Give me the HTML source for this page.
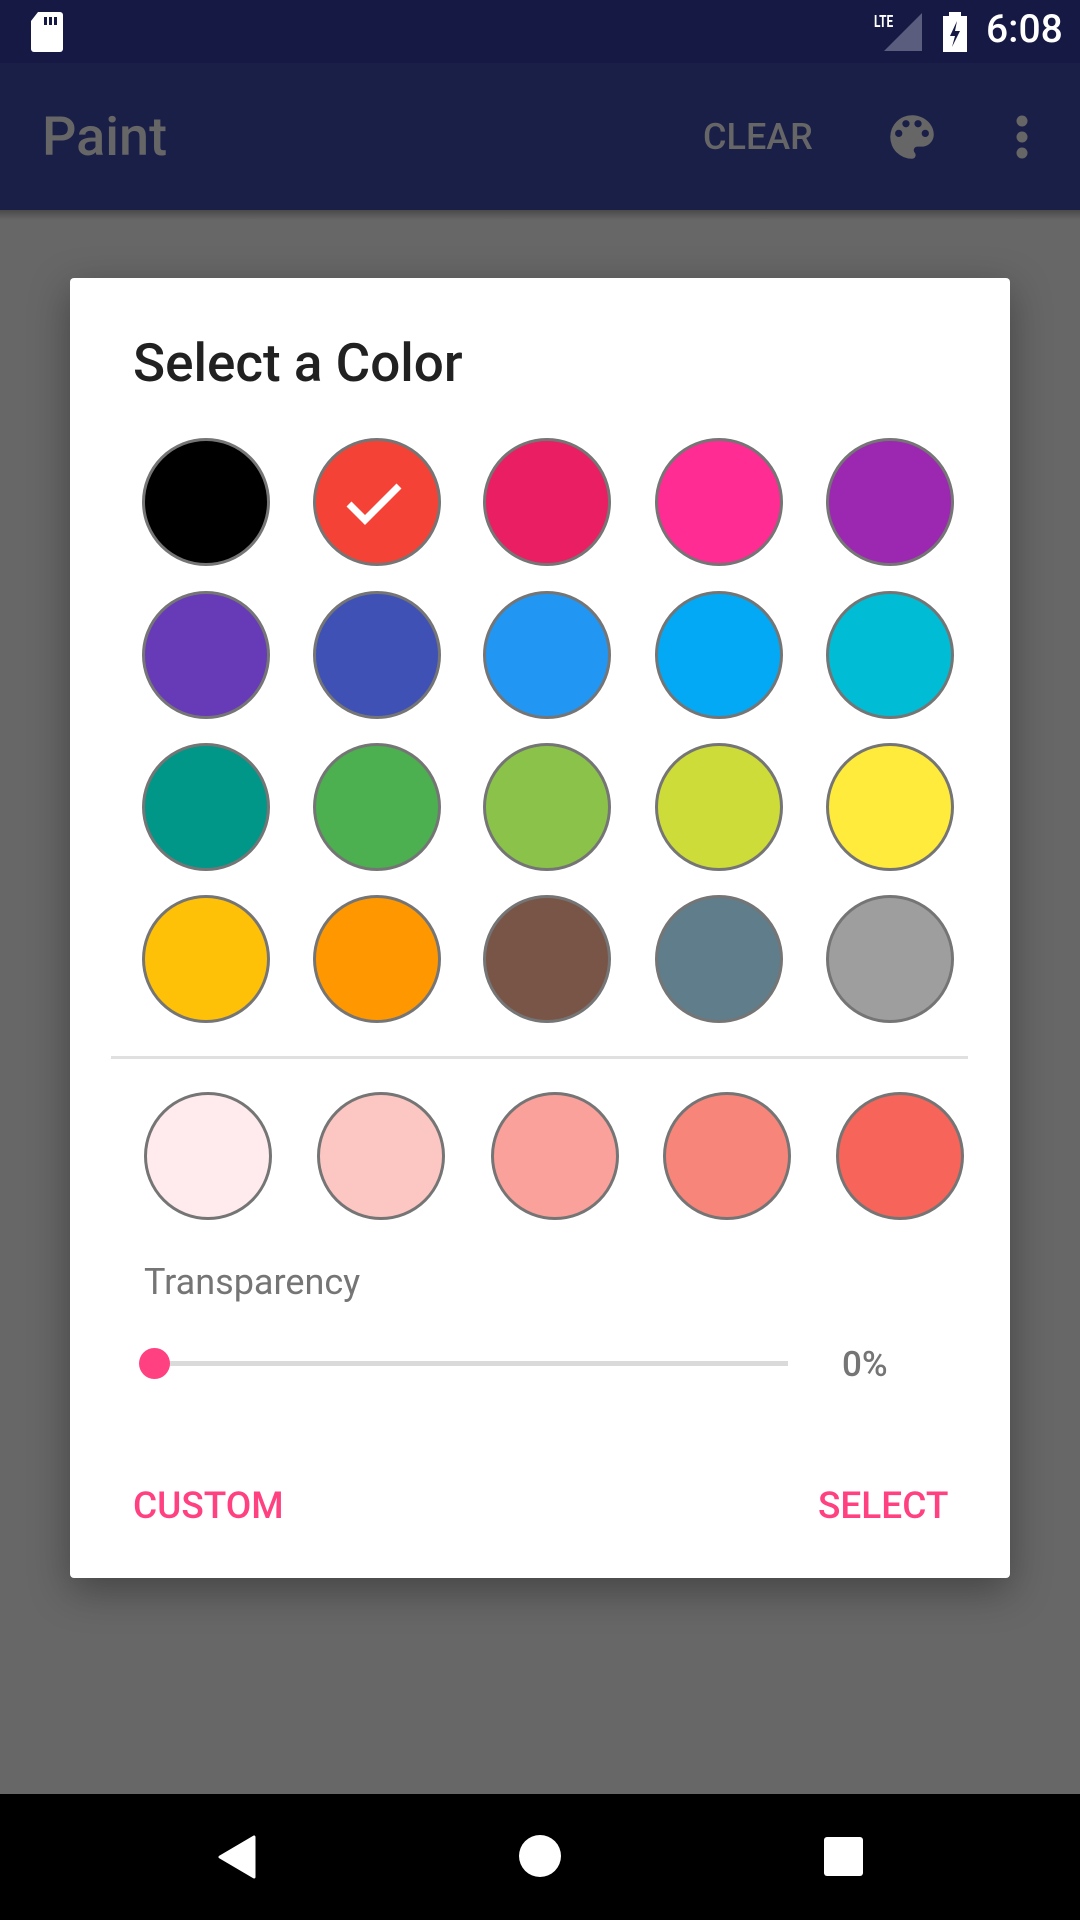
<!DOCTYPE html>
<html><head><meta charset="utf-8"><style>
*{margin:0;padding:0;box-sizing:border-box}
body{width:1080px;height:1920px;position:relative;overflow:hidden;background:#676767;font-family:"Roboto","Liberation Sans",sans-serif}
.abs{position:absolute}
.c{position:absolute;width:128px;height:128px;border-radius:50%;border:3px solid #757575}
</style></head><body>
<div class="abs" style="left:0;top:0;width:1080px;height:63px;background:#151943"></div>
<div class="abs" style="left:0;top:63px;width:1080px;height:147px;background:#1a1f48"></div>
<div class="abs" style="left:0;top:210px;width:1080px;height:10px;background:linear-gradient(#4a4a4a,#676767)"></div>
<svg class="abs" style="left:30px;top:12px" width="34" height="40" viewBox="0 0 34 40"><path d="M8 0H30a3 3 0 0 1 3 3V37a3 3 0 0 1-3 3H4a3 3 0 0 1-3-3V9z" fill="#fff"/><rect x="14" y="5" width="3" height="8" fill="#151943"/><rect x="19" y="5" width="3" height="8" fill="#151943"/><rect x="24" y="5" width="3" height="8" fill="#151943"/></svg>
<div class="abs" style="left:874px;top:12px;color:#fff;font-size:17px;font-weight:bold;transform:scaleX(.7);transform-origin:left">LTE</div>
<svg class="abs" style="left:884px;top:13px" width="38" height="38"><polygon points="38,0 38,38 0,38" fill="#5a5d7e"/></svg>
<svg class="abs" style="left:941px;top:12px" width="28" height="40"><rect x="8" y="0" width="12" height="4" fill="#fff"/><rect x="2" y="4" width="24" height="36" fill="#fff"/><polygon points="16,9 9,24 14,24 11,35 19,19 14,19" fill="#151943"/></svg>
<div class="abs" style="left:986px;top:6px;color:#fff;font-size:39px;font-weight:500">6:08</div>
<div class="abs" style="left:42px;top:106px;color:#666;font-size:54px;font-weight:500">Paint</div>
<div class="abs" style="left:703px;top:116px;color:#666;font-size:36px;font-weight:500">CLEAR</div>
<svg class="abs" style="left:883px;top:108px" width="58" height="58" viewBox="0 0 24 24"><path fill="#666" d="M12 3a9 9 0 0 0 0 18c.83 0 1.5-.67 1.5-1.5 0-.39-.15-.74-.39-1.01-.23-.26-.38-.61-.38-.99 0-.83.67-1.5 1.5-1.5H16c2.76 0 5-2.240 5-5 0-4.42-4.030-8-9-8zm-5.5 9a1.5 1.5 0 1 1 0-3 1.5 1.5 0 0 1 0 3zm3-4a1.5 1.5 0 1 1 0-3 1.5 1.5 0 0 1 0 3zm5 0a1.5 1.5 0 1 1 0-3 1.5 1.5 0 0 1 0 3zm3 4a1.5 1.5 0 1 1 0-3 1.5 1.5 0 0 1 0 3z"/></svg>
<svg class="abs" style="left:1012px;top:114px" width="20" height="46"><circle cx="10" cy="7" r="5.5" fill="#666"/><circle cx="10" cy="23" r="5.5" fill="#666"/><circle cx="10" cy="39" r="5.5" fill="#666"/></svg>
<div class="abs" style="left:70px;top:278px;width:940px;height:1300px;background:#fff;border-radius:4px;box-shadow:0 12px 40px rgba(0,0,0,.35)"></div>
<div class="abs" style="left:133px;top:332px;color:#212121;font-size:53px;font-weight:500">Select a Color</div>
<div class="c" style="left:142px;top:438px;background:#000"></div>
<div class="c" style="left:313px;top:438px;background:#f44336"></div>
<svg class="abs" style="left:345px;top:478px" width="64" height="50"><polyline points="4,26 20,42 54,8" fill="none" stroke="#fff" stroke-width="7"/></svg>
<div class="c" style="left:483px;top:438px;background:#e91e63"></div>
<div class="c" style="left:655px;top:438px;background:#ff2c93"></div>
<div class="c" style="left:826px;top:438px;background:#9c27b0"></div>
<div class="c" style="left:142px;top:591px;background:#673ab7"></div>
<div class="c" style="left:313px;top:591px;background:#3f51b5"></div>
<div class="c" style="left:483px;top:591px;background:#2196f3"></div>
<div class="c" style="left:655px;top:591px;background:#03a9f4"></div>
<div class="c" style="left:826px;top:591px;background:#00bcd4"></div>
<div class="c" style="left:142px;top:743px;background:#009688"></div>
<div class="c" style="left:313px;top:743px;background:#4caf50"></div>
<div class="c" style="left:483px;top:743px;background:#8bc34a"></div>
<div class="c" style="left:655px;top:743px;background:#cddc39"></div>
<div class="c" style="left:826px;top:743px;background:#ffeb3b"></div>
<div class="c" style="left:142px;top:895px;background:#ffc107"></div>
<div class="c" style="left:313px;top:895px;background:#ff9800"></div>
<div class="c" style="left:483px;top:895px;background:#795548"></div>
<div class="c" style="left:655px;top:895px;background:#607d8b"></div>
<div class="c" style="left:826px;top:895px;background:#9e9e9e"></div>
<div class="abs" style="left:111px;top:1056px;width:857px;height:3px;background:#e0e0e0"></div>
<div class="c" style="left:144px;top:1092px;background:#ffebee"></div>
<div class="c" style="left:317px;top:1092px;background:#fcc6c3"></div>
<div class="c" style="left:491px;top:1092px;background:#f9a19a"></div>
<div class="c" style="left:663px;top:1092px;background:#f8857a"></div>
<div class="c" style="left:836px;top:1092px;background:#f6645a"></div>
<div class="abs" style="left:144px;top:1261px;color:#757575;font-size:36px">Transparency</div>
<div class="abs" style="left:154px;top:1361px;width:634px;height:5px;background:#dadada"></div>
<div class="abs" style="left:139px;top:1348px;width:31px;height:31px;border-radius:50%;background:#ff4081"></div>
<div class="abs" style="left:842px;top:1344px;color:#757575;font-size:35px;font-weight:500">0%</div>
<div class="abs" style="left:133px;top:1485px;color:#ff4081;font-size:37px;font-weight:500">CUSTOM</div>
<div class="abs" style="left:818px;top:1485px;color:#ff4081;font-size:37px;font-weight:500">SELECT</div>
<div class="abs" style="left:0;top:1794px;width:1080px;height:126px;background:#000"></div>
<svg class="abs" style="left:214px;top:1835px" width="44" height="44"><path d="M40 2V42L6 22Z" fill="#fff" stroke="#fff" stroke-width="3" stroke-linejoin="round"/></svg>
<div class="abs" style="left:519px;top:1835px;width:42px;height:42px;border-radius:50%;background:#fff"></div>
<div class="abs" style="left:824px;top:1837px;width:39px;height:39px;border-radius:3px;background:#fff"></div>
</body></html>
